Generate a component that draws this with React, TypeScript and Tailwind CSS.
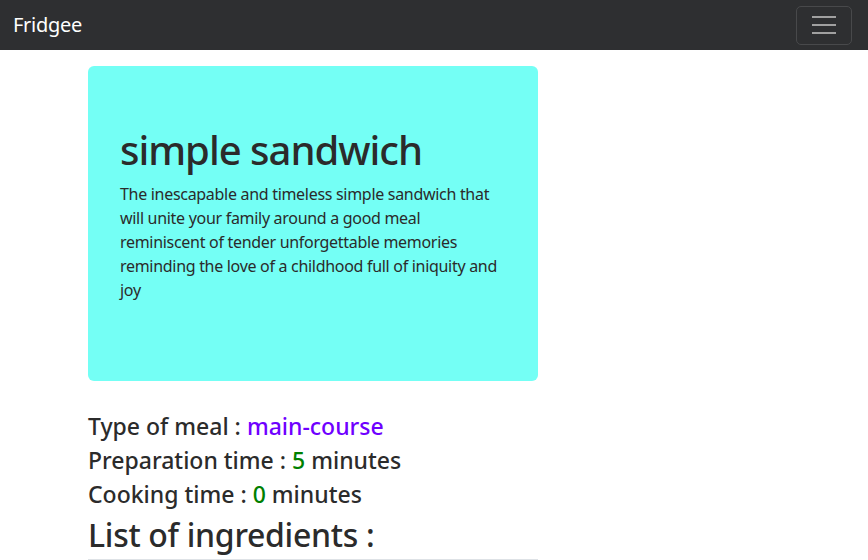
export default function App() {
  return (
    <div className="min-h-[560px] bg-white text-[#2b2b2b]" style={{ fontFamily: '"Noto Sans", sans-serif' }}>
      <nav className="flex h-[50px] items-center justify-between bg-[#2e2f31] pl-[13px] pr-4">
        <span className="text-[20px] tracking-[-0.3px] text-white">Fridgee</span>
        <button className="flex h-[39px] w-[56px] flex-col items-center justify-center gap-[6px] rounded-[5px] border border-[#48494b]">
          <span className="block h-[2px] w-[24px] bg-[#a0a0a0]" />
          <span className="block h-[2px] w-[24px] bg-[#a0a0a0]" />
          <span className="block h-[2px] w-[24px] bg-[#a0a0a0]" />
        </button>
      </nav>
      <main className="ml-[88px] w-[450px] pt-4">
        <section className="h-[315px] rounded-[6px] bg-[#74fff5] px-8 pt-[60px]">
          <h1 className="text-[40px] font-medium leading-[48px] tracking-[-1px]">simple sandwich</h1>
          <p className="mt-2 text-[16px] leading-[24px] tracking-[-0.3px]">
            The inescapable and timeless simple sandwich that will unite your family around a good meal reminiscent of tender unforgettable memories reminding the love of a childhood full of iniquity and joy
          </p>
        </section>
        <div className="mt-[28px] text-[23px] font-medium leading-[34px]">
          <p>
            Type of meal : <span className="text-[#6f00ff]">main-course</span>
          </p>
          <p>
            Preparation time : <span className="text-[#008000]">5</span> minutes
          </p>
          <p>
            Cooking time : <span className="text-[#008000]">0</span> minutes
          </p>
        </div>
        <h2 className="mt-[5px] text-[32px] font-medium leading-[38px] tracking-[-0.3px]">List of ingredients :</h2>
        <div className="mt-[5px] border-t border-[#dee2e6]" />
      </main>
    </div>
  );
}
